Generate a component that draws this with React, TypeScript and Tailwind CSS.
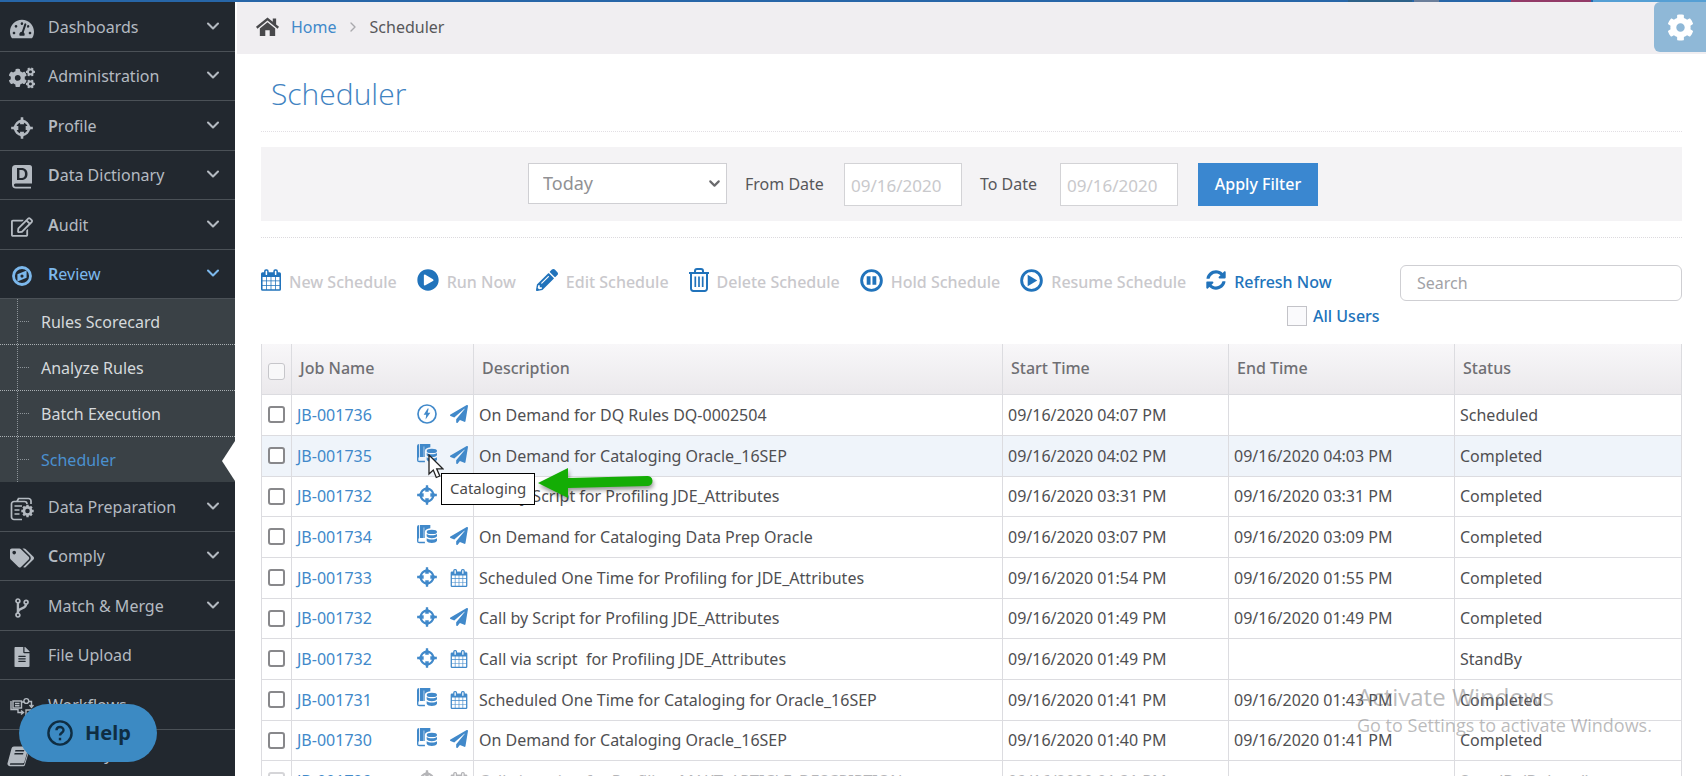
import React from "react";
import {
  FaTachometerAlt,
  FaCogs,
  FaRegEdit,
  FaTags,
  FaFileAlt,
  FaPlayCircle,
  FaPencilAlt,
  FaSyncAlt,
  FaPaperPlane,
  FaCog,
} from "react-icons/fa";
import { ChevronDown, ChevronRight } from "lucide-react";

type IconProps = { className?: string };

function CrosshairIcon({ className }: IconProps) {
  return (
    <svg viewBox="0 0 24 24" className={className} fill="none" stroke="currentColor" aria-hidden="true">
      <circle cx="12" cy="12" r="7.600" strokeWidth="2.600" />
      <path d="M12 3v5M12 16V21M3 12h5M16 12H21" strokeWidth="4.200" />
      <path d="M12 .2v4M12 19.800v4M.2 12h4M19.800 12h4" strokeWidth="2.800" />
    </svg>
  );
}

function CompassIcon({ className }: IconProps) {
  return (
    <svg viewBox="0 0 24 24" className={className} aria-hidden="true">
      <circle cx="12" cy="12" r="10.200" fill="none" stroke="currentColor" strokeWidth="3.400" />
      <path
        fill="currentColor"
        fillRule="evenodd"
        d="M17.500 5.500V14L6.500 18.500V10ZM12 10.200A1.900 1.900 0 1 0 12 14A1.900 1.900 0 1 0 12 10.200Z"
      />
    </svg>
  );
}

function BranchIcon({ className }: IconProps) {
  return (
    <svg viewBox="0 0 16 22" className={className} fill="none" stroke="currentColor" strokeWidth="1.900" aria-hidden="true">
      <circle cx="3.500" cy="3.200" r="2.100" />
      <circle cx="3.500" cy="18.800" r="2.100" />
      <circle cx="12.500" cy="4.700" r="2.100" />
      <path d="M3.500 5.500V16.500M12.500 7C12.500 12.500 4 10.500 3.500 15.500" strokeWidth="2.600" />
    </svg>
  );
}

function SlantedBookIcon({ className }: IconProps) {
  return (
    <svg viewBox="0 0 24 24" className={className} aria-hidden="true">
      <path
        fill="currentColor"
        fillRule="evenodd"
        d="M7.500 1.500H21.500A1.800 1.800 0 0 1 23.200 3.800L19 18.500A2 2 0 0 1 17 20H4.200C3 20 2.700 21.600 4 21.600H18.500L22.800 8V11L19.500 22A2 2 0 0 1 17.700 23.300H3.500A3 3 0 0 1 .8 19L5 3.500A2.700 2.700 0 0 1 7.500 1.500ZM9.200 5.500L8.800 7H18.500L18.900 5.500ZM8.300 8.800L7.900 10.300H17.500L17.900 8.800Z"
      />
    </svg>
  );
}

function DictionaryIcon({ className }: IconProps) {
  return (
    <svg viewBox="0 0 20 24" className={className} aria-hidden="true">
      <path
        fill="currentColor"
        fillRule="evenodd"
        d="M3.500 0H17.500A2.500 2.500 0 0 1 20 2.500V18.500H3.500a1.600 1.600 0 0 0 0 3.200H19V23.500H4a4 4 0 0 1-4-4V3.500A3.500 3.500 0 0 1 3.500 0ZM5 3V15H9.500C13.500 15 15.500 12.500 15.500 9S13.500 3 9.500 3ZM7.400 5H9.500C11.900 5 13 6.500 13 9S11.900 13 9.500 13H7.400Z"
      />
    </svg>
  );
}

function DataPrepIcon({ className }: IconProps) {
  return (
    <svg viewBox="0 0 24 24" className={className} fill="none" stroke="currentColor" strokeWidth="1.700" aria-hidden="true">
      <path d="M12 22.500H4A2.500 2.500 0 0 1 1.500 20V7A2.500 2.500 0 0 1 4 4.500H14.500A2.500 2.500 0 0 1 17 7" />
      <path d="M7 4.500L8.500 1.500H18.500A2.500 2.500 0 0 1 21 4V7" />
      <path d="M4.500 9H12M4.500 13H9.500M4.500 17H9.500" />
      <circle cx="17.500" cy="14" r="3.600" strokeWidth="2.600" />
      <path d="M17.500 7.800V10M17.500 18V20.200M11.300 14H13.500M21.500 14H23.700M13.200 9.700L14.700 11.200M20.300 16.800L21.800 18.300M21.800 9.700L20.300 11.200M14.700 16.800L13.200 18.300" strokeWidth="2.400" />
    </svg>
  );
}

function WorkflowIcon({ className }: IconProps) {
  return (
    <svg viewBox="0 0 24 20" className={className} fill="none" stroke="currentColor" strokeWidth="1.400" aria-hidden="true">
      <rect x="3" y="4" width="8.500" height="7" />
      <path d="M5 6.500H9.500M5 8.700H9.500M11.500 5H14M18.500 4.500H21.500V9M1 4V12.500H8V15.500H13M11 13.500L13.500 15.500L11 17.500M19.500 8L21.500 10.500L23.500 8" />
      <circle cx="16.300" cy="4" r="2.400" />
      <path d="M16 19V13H21" />
    </svg>
  );
}

function HomeIcon({ className }: IconProps) {
  return (
    <svg viewBox="0 0 24 20" className={className} fill="currentColor" aria-hidden="true">
      <path d="M12 0L0 9.800L1.500 11.700L12 3.200L22.500 11.700L24 9.800L21 7.300V1H17.500V4.500Z" />
      <path d="M12 5L4 11.500V19.500H9.700V13.500H14.300V19.500H20V11.500Z" />
    </svg>
  );
}

function CalendarIcon({ className }: IconProps) {
  return (
    <svg viewBox="0 0 26 28" className={className} aria-hidden="true">
      <path
        fill="currentColor"
        fillRule="evenodd"
        d="M2 26h4.500v-4.500H2ZM7.500 26h5v-4.500h-5ZM2 20.500h4.500v-5H2ZM7.500 20.500h5v-5h-5ZM2 14.500h4.500V10H2ZM13.500 26h5v-4.500h-5ZM7.500 14.500h5V10h-5ZM19.500 26H24v-4.500h-4.500ZM13.500 20.500h5v-5h-5ZM8 7V2.500A.5.5 0 0 0 7.500 2h-1a.5.5 0 0 0-.5.500V7a.5.5 0 0 0 .5.500h1A.5.5 0 0 0 8 7ZM19.500 20.500H24v-5h-4.500ZM13.500 14.500h5V10h-5ZM19.500 14.500H24V10h-4.500ZM20 7V2.500a.5.5 0 0 0-.5-.500h-1a.5.5 0 0 0-.5.500V7a.5.5 0 0 0 .5.500h1A.5.5 0 0 0 20 7ZM26 6v20a2 2 0 0 1-2 2H2a2 2 0 0 1-2-2V6a2 2 0 0 1 2-2h2V2.500A2.500 2.500 0 0 1 6.500 0h1A2.500 2.500 0 0 1 10 2.500V4h6V2.500A2.500 2.500 0 0 1 18.500 0h1A2.500 2.500 0 0 1 22 2.500V4h2a2 2 0 0 1 2 2Z"
      />
    </svg>
  );
}

function TrashIcon({ className }: IconProps) {
  return (
    <svg viewBox="0 0 20 24" className={className} fill="none" stroke="currentColor" aria-hidden="true">
      <path d="M0 5H20" strokeWidth="2" />
      <path d="M6 4.500V3A2 2 0 0 1 8 1H12A2 2 0 0 1 14 3V4.500" strokeWidth="2" />
      <path d="M2 5V20.500A2.300 2.300 0 0 0 4.300 22.900H15.700A2.300 2.300 0 0 0 18 20.500V5" strokeWidth="2" />
      <path d="M6.300 8.500V19M10 8.500V19M13.700 8.500V19" strokeWidth="1.700" />
    </svg>
  );
}

function PauseIcon({ className }: IconProps) {
  return (
    <svg viewBox="0 0 24 24" className={className} aria-hidden="true">
      <circle cx="12" cy="12" r="10.300" fill="none" stroke="currentColor" strokeWidth="3" />
      <path fill="currentColor" d="M7 7.500h4v9H7zM13 7.500h4v9h-4z" />
    </svg>
  );
}

function ResumeIcon({ className }: IconProps) {
  return (
    <svg viewBox="0 0 24 24" className={className} aria-hidden="true">
      <circle cx="12" cy="12" r="10.300" fill="none" stroke="currentColor" strokeWidth="3" />
      <path fill="currentColor" d="M8 6L18 12L8 18Z" />
    </svg>
  );
}

function BoltIcon({ className }: IconProps) {
  return (
    <svg viewBox="0 0 24 24" className={className} aria-hidden="true">
      <circle cx="12" cy="12" r="10.800" fill="none" stroke="currentColor" strokeWidth="2" />
      <path fill="currentColor" d="M12.800 5.500L8 13H11L10.300 18.500L16 10.500H12.800L14 5.500Z" />
    </svg>
  );
}

function CatalogIcon({ className }: IconProps) {
  return (
    <svg viewBox="0 0 24 22" preserveAspectRatio="xMidYMin" className={className} fill="currentColor" aria-hidden="true">
      <path d="M2.500 0V16.200H1.700V20H9.500V22H3A3 3 0 0 1 0 19V2.500A2.500 2.500 0 0 1 2.500 0Z" />
      <path d="M3.500 0H16V4C12 4.500 9.500 6 9.500 8.500V15.500H8.700V3H8V15.500H3.500Z" />
      <ellipse cx="17.800" cy="8.300" rx="6.200" ry="2.600" />
      <path d="M11.600 10.800C14 12.900 21.600 12.900 24 10.800V13.500C22.500 16.600 13 16.600 11.600 13.500ZM11.600 15.800C14 18 21.600 18 24 15.800V19C22.500 22.600 13 22.600 11.600 19Z" />
    </svg>
  );
}

type NavItem = {
  label: string;
  icon: React.ComponentType<IconProps>;
  iconClass: string;
  boldFirst?: boolean;
  expandable?: boolean;
  active?: boolean;
  children?: string[];
};

const navItems: NavItem[] = [
  { label: "Dashboards", icon: FaTachometerAlt, iconClass: "size-6", expandable: true },
  { label: "Administration", icon: FaCogs, iconClass: "size-[26px]", expandable: true },
  { label: "Profile", icon: CrosshairIcon, iconClass: "size-[22px]", boldFirst: true, expandable: true },
  { label: "Data Dictionary", icon: DictionaryIcon, iconClass: "h-6 w-5", boldFirst: true, expandable: true },
  { label: "Audit", icon: FaRegEdit, iconClass: "size-[22px]", boldFirst: true, expandable: true },
  {
    label: "Review",
    icon: CompassIcon,
    iconClass: "size-5",
    boldFirst: true,
    expandable: true,
    active: true,
    children: ["Rules Scorecard", "Analyze Rules", "Batch Execution", "Scheduler"],
  },
  { label: "Data Preparation", icon: DataPrepIcon, iconClass: "size-6", expandable: true },
  { label: "Comply", icon: FaTags, iconClass: "size-6", boldFirst: true, expandable: true },
  { label: "Match & Merge", icon: BranchIcon, iconClass: "h-5 w-4", expandable: true },
  { label: "File Upload", icon: FaFileAlt, iconClass: "size-5" },
  { label: "Workflows", icon: WorkflowIcon, iconClass: "h-5 w-6" },
  { label: "Glossary", icon: SlantedBookIcon, iconClass: "mr-2 size-[22px]" },
];

function SubMenu({ items }: { items: string[] }) {
  return (
    <ul className="relative bg-[#3a4146]">
      <span className="absolute inset-y-0 left-[17px] border-l border-dotted border-[#8d9499]" />
      {items.map((item) => {
        const current = item === "Scheduler";
        return (
          <li key={item} className="relative border-b border-dotted border-[#a9afb3] last:border-b-0">
            <a
              href="#"
              aria-current={current ? "page" : undefined}
              className={`flex h-[45px] items-center pl-[18px] text-[16px] ${current ? "text-[#4a90d0]" : "text-[#d5d9dc]"}`}
            >
              <span className="mr-3 w-[11px] border-t border-dotted border-[#8d9499]" />
              {item}
            </a>
            {current && (
              <span className="absolute top-1 right-0 h-10 w-[13px] bg-white [clip-path:polygon(100%_0,0_50%,100%_100%)]" />
            )}
          </li>
        );
      })}
    </ul>
  );
}

function Sidebar() {
  return (
    <nav className="w-[235px] shrink-0 overflow-hidden bg-[#22282f]">
      <ul>
        {navItems.map((item, i) => {
          const Icon = item.icon;
          return (
            <li key={item.label}>
              <button
                type="button"
                className={`flex w-full items-center border-b border-[#4b5157] text-left text-[16px] ${
                  i % 2 ? "h-[49px]" : "h-[50px]"
                } ${item.active ? "text-[#7cb8ec]" : "text-[#b4bac1]"}`}
              >
                <span className="flex w-11 items-center justify-center pt-1">
                  <Icon className={item.iconClass} />
                </span>
                <span className="flex-1 pl-1">
                  {item.boldFirst ? (
                    <>
                      <b className="font-semibold">{item.label[0]}</b>
                      {item.label.slice(1)}
                    </>
                  ) : (
                    item.label
                  )}
                </span>
                {item.expandable && <ChevronDown className="mr-3 mb-[2px] size-5" strokeWidth={2.5} />}
              </button>
              {item.children && <SubMenu items={item.children} />}
            </li>
          );
        })}
      </ul>
    </nav>
  );
}

const actions: { label: string; icon: React.ComponentType<IconProps>; iconClass: string; enabled?: boolean }[] = [
  { label: "New Schedule", icon: CalendarIcon, iconClass: "h-[22px] w-5" },
  { label: "Run Now", icon: FaPlayCircle, iconClass: "size-[22px]" },
  { label: "Edit Schedule", icon: FaPencilAlt, iconClass: "size-[22px]" },
  { label: "Delete Schedule", icon: TrashIcon, iconClass: "h-6 w-5" },
  { label: "Hold Schedule", icon: PauseIcon, iconClass: "size-[23px]" },
  { label: "Resume Schedule", icon: ResumeIcon, iconClass: "size-[23px]" },
  { label: "Refresh Now", icon: FaSyncAlt, iconClass: "size-5", enabled: true },
];

type Kind = "rule" | "catalog" | "profile";
type Job = {
  id: string;
  kind: Kind;
  trigger: "send" | "calendar";
  description: string;
  start: string;
  end: string;
  status: string;
  hovered?: boolean;
  deleted?: boolean;
};

const jobs: Job[] = [
  { id: "JB-001736", kind: "rule", trigger: "send", description: "On Demand for DQ Rules DQ-0002504", start: "09/16/2020 04:07 PM", end: "", status: "Scheduled" },
  { id: "JB-001735", kind: "catalog", trigger: "send", description: "On Demand for Cataloging Oracle_16SEP", start: "09/16/2020 04:02 PM", end: "09/16/2020 04:03 PM", status: "Completed", hovered: true },
  { id: "JB-001732", kind: "profile", trigger: "send", description: "Call by Script for Profiling JDE_Attributes", start: "09/16/2020 03:31 PM", end: "09/16/2020 03:31 PM", status: "Completed" },
  { id: "JB-001734", kind: "catalog", trigger: "send", description: "On Demand for Cataloging Data Prep Oracle", start: "09/16/2020 03:07 PM", end: "09/16/2020 03:09 PM", status: "Completed" },
  { id: "JB-001733", kind: "profile", trigger: "calendar", description: "Scheduled One Time for Profiling for JDE_Attributes", start: "09/16/2020 01:54 PM", end: "09/16/2020 01:55 PM", status: "Completed" },
  { id: "JB-001732", kind: "profile", trigger: "send", description: "Call by Script for Profiling JDE_Attributes", start: "09/16/2020 01:49 PM", end: "09/16/2020 01:49 PM", status: "Completed" },
  { id: "JB-001732", kind: "profile", trigger: "calendar", description: "Call via script  for Profiling JDE_Attributes", start: "09/16/2020 01:49 PM", end: "", status: "StandBy" },
  { id: "JB-001731", kind: "catalog", trigger: "calendar", description: "Scheduled One Time for Cataloging for Oracle_16SEP", start: "09/16/2020 01:41 PM", end: "09/16/2020 01:43 PM", status: "Completed" },
  { id: "JB-001730", kind: "catalog", trigger: "send", description: "On Demand for Cataloging Oracle_16SEP", start: "09/16/2020 01:40 PM", end: "09/16/2020 01:41 PM", status: "Completed" },
  { id: "JB-001729", kind: "profile", trigger: "calendar", description: "Call via script  for Profiling MAKT_ARTICLE_DESCRIPTION", start: "09/16/2020 01:31 PM", end: "", status: "StandBy(Deleted)", deleted: true },
];

const kindIcons: Record<Kind, React.ComponentType<IconProps>> = {
  rule: BoltIcon,
  catalog: CatalogIcon,
  profile: CrosshairIcon,
};

function CatalogTooltip() {
  return (
    <>
      <svg viewBox="0 0 16 25" className="absolute top-[10px] left-[11px] z-20 h-[25px] w-4" aria-hidden="true">
        <path d="M1 1V20L5.300 16L8.300 23.500L11.800 22L8.700 14.800H14.800Z" fill="#fff" stroke="#222" strokeWidth="1.300" />
      </svg>
      <div
        role="tooltip"
        className="absolute top-[29px] left-6 z-10 flex h-8 items-center border border-black bg-white px-2 text-[15px] whitespace-nowrap text-[#4a4a4a]"
      >
        Cataloging
      </div>
      <svg viewBox="0 0 120 34" className="absolute top-[23px] left-[121px] z-10 h-[34px] w-[120px] drop-shadow-[1px_3px_2px_rgba(0,0,0,0.4)]" aria-hidden="true">
        <path d="M0 16L30 1V11L109 9A5 5 0 0 1 110 19L30 21V31Z" fill="#14ad05" />
      </svg>
    </>
  );
}

function JobRow({ job }: { job: Job }) {
  const KindIcon = kindIcons[job.kind];
  const cell = "border border-[#dcdce0] px-[5px] whitespace-pre";
  const ink = job.deleted ? "text-[#b5b5b8]" : "text-[#4f4f52]";
  return (
    <tr className={`h-[41px] nth-[3n]:h-10 ${job.hovered ? "bg-[#eff4fa]" : ""} ${ink}`}>
      <td className="border border-[#dcdce0]">
        <input
          type="checkbox"
          aria-label={`Select ${job.id}`}
          className={`mx-auto block size-[17px] appearance-none rounded-[3px] border-2 bg-white ${job.deleted ? "border-[#d5d5d8]" : "border-[#88888b]"}`}
        />
      </td>
      <td className={cell}>
        <div className="flex items-center">
          <a href="#" className="flex-1 text-[#4189ca]">
            {job.id}
          </a>
          <span
            className={`relative mr-[13px] ${job.kind === "catalog" ? "mb-1" : "mb-[2px]"} ${job.deleted ? "text-[#b5b5b8]" : "text-[#4189ca]"}`}
          >
            <KindIcon className="size-5" />
            {job.hovered && <CatalogTooltip />}
          </span>
          <span className={job.deleted ? "text-[#b5b5b8]" : "text-[#4189ca]"}>
            {job.trigger === "send" ? <FaPaperPlane className="mb-[2px] size-[18px]" /> : <CalendarIcon className="size-[18px]" />}
          </span>
        </div>
      </td>
      <td className={cell}>{job.description}</td>
      <td className={cell}>{job.start}</td>
      <td className={cell}>{job.end}</td>
      <td className={cell}>{job.status}</td>
    </tr>
  );
}

function JobTable() {
  const head = "border-x border-[#dcdce0] px-2 pb-[2px] text-left font-medium";
  return (
    <table className="w-full table-fixed border-collapse text-[16px]">
      <colgroup>
        <col className="w-[30px]" />
        <col className="w-[182px]" />
        <col />
        <col className="w-[226px]" />
        <col className="w-[226px]" />
        <col className="w-[227px]" />
      </colgroup>
      <thead>
        <tr className="h-[50px] bg-linear-to-b from-[#f8f7f9] to-[#ebe9ec] text-[16px] text-[#6f6f73]">
          <th className="border-x border-[#dcdce0] pt-[6px]">
            <input
              type="checkbox"
              aria-label="Select all jobs"
              className="mx-auto block size-[17px] appearance-none rounded-[3px] border border-[#c6c6ca] bg-[#f8f8f9]"
            />
          </th>
          <th className={head}>Job Name</th>
          <th className={head}>Description</th>
          <th className={head}>Start Time</th>
          <th className={head}>End Time</th>
          <th className={head}>Status</th>
        </tr>
      </thead>
      <tbody>
        {jobs.map((job, i) => (
          <JobRow key={i} job={job} />
        ))}
      </tbody>
    </table>
  );
}

function FilterBar() {
  const date = "h-[43px] w-[118px] border border-[#d3d3d6] bg-white px-[6px] pt-[2px] text-[17px] text-[#c9c9cc] outline-none";
  return (
    <form className="flex h-[74px] items-center bg-[#f4f3f5] pl-[267px] text-[16px] text-[#57575a]">
      <div className="relative mb-[2px]">
        <select
          aria-label="Period"
          defaultValue="Today"
          className="h-[41px] w-[199px] appearance-none border border-[#cfcfd3] bg-white pl-[14px] text-[18px] text-[#919194]"
        >
          <option>Today</option>
        </select>
        <ChevronDown className="pointer-events-none absolute top-3 right-1 size-[17px] text-[#6a6a6d]" strokeWidth={3} />
      </div>
      <label htmlFor="from-date" className="ml-[18px] w-[99px]">
        From Date
      </label>
      <input id="from-date" className={date} defaultValue="09/16/2020" />
      <label htmlFor="to-date" className="ml-[18px] w-20">
        To Date
      </label>
      <input id="to-date" className={date} defaultValue="09/16/2020" />
      <button type="button" className="ml-5 h-[43px] w-[120px] bg-[#3a87d0] text-[16px] font-medium text-white">
        Apply Filter
      </button>
    </form>
  );
}

function Toolbar() {
  return (
    <div className="flex items-start justify-between pt-[27px] pb-[15px]">
      <div>
        <div className="flex h-[34px] items-center gap-5">
          {actions.map(({ label, icon: Icon, iconClass, enabled }) => (
            <button
              key={label}
              type="button"
              className={`flex items-center gap-2 text-[16px] font-medium whitespace-nowrap ${enabled ? "text-[#2173bb]" : "text-[#c9c8cc]"}`}
            >
              <Icon className={`mb-1 shrink-0 text-[#2173bb] ${iconClass}`} />
              {label}
            </button>
          ))}
        </div>
        <label className="-mr-12 flex items-center justify-end gap-[6px] pt-[5px] pb-px text-[16px] font-medium text-[#2173bb]">
          <input type="checkbox" className="size-5 appearance-none border border-[#c3c3c8] bg-[#fafafc]" />
          All Users
        </label>
      </div>
      <input
        type="search"
        aria-label="Search"
        placeholder="Search"
        className="h-9 w-[282px] rounded-md border border-[#cfcfd3] bg-white px-4 text-[16px] text-[#555] outline-none placeholder:text-[#a2a2a6]"
      />
    </div>
  );
}

export default function App() {
  return (
    <div className="relative flex h-screen flex-col overflow-hidden bg-white font-['Noto_Sans','Open_Sans',sans-serif]">
      <div className="flex h-[2px] shrink-0 justify-end gap-[2px] bg-[#2766a8]">
        <span className="w-16 bg-[#2d6188]" />
        <span className="w-[25px] bg-[#6c7f9b]" />
        <span className="w-[68px] bg-[#2766a8]" />
        <span className="w-20 bg-[#933a68]" />
        <span className="w-[113px] bg-[#559fd4]" />
      </div>
      <div className="flex min-h-0 flex-1">
        <Sidebar />
        <main className="ml-[2px] min-w-0 flex-1 overflow-hidden">
          <header className="flex h-[52px] items-start justify-between bg-[#f0eef1]">
            <div className="flex h-[50px] items-center pl-[19px] text-[16px]">
              <HomeIcon className="h-5 w-[23px] text-[#48484b]" />
              <a href="#" className="ml-3 text-[#4189ca]">
                Home
              </a>
              <ChevronRight className="mr-[9px] ml-2 size-4 text-[#a9a9ad]" />
              <span className="text-[#57575a]">Scheduler</span>
            </div>
            <button
              type="button"
              aria-label="Settings"
              className="flex h-[50px] w-[52px] items-center justify-center rounded-l-md bg-[#8fb8d7] text-white"
            >
              <FaCog className="size-[27px]" />
            </button>
          </header>
          <div className="pr-6 pl-6">
            <h1 className="flex h-[78px] items-center border-b border-dotted border-[#e2dfe4] pt-[2px] pl-[10px] font-['Open_Sans',sans-serif] text-[30px] font-light text-[#3f83c1]">
              Scheduler
            </h1>
            <div className="border-b border-dotted border-[#dcdade] pt-[15px] pb-4">
              <FilterBar />
            </div>
            <Toolbar />
            <JobTable />
          </div>
        </main>
      </div>
      <div className="pointer-events-none absolute right-12 bottom-[37px] w-[301px] font-['Open_Sans',sans-serif] text-[#77777a]/50">
        <div className="text-[24px] leading-7">Activate Windows</div>
        <div className="text-[18px] leading-7 whitespace-nowrap">Go to Settings to activate Windows.</div>
      </div>
      <button
        type="button"
        className="absolute bottom-[14px] left-[19px] flex h-[58px] w-[138px] items-center rounded-full bg-[#3c8ac3] pl-7 text-[20px] font-bold text-[#0f2d42]"
      >
        <svg viewBox="0 0 26 26" className="mr-3 size-[26px]" fill="none" stroke="currentColor" strokeWidth="2.400" aria-hidden="true">
          <circle cx="13" cy="13" r="11.600" />
          <path d="M9.500 10.300C9.500 6 16.500 6 16.500 10.200C16.500 12.600 13 12.900 13 15.500" />
          <path d="M13 17.800V20.300" />
        </svg>
        Help
      </button>
    </div>
  );
}
